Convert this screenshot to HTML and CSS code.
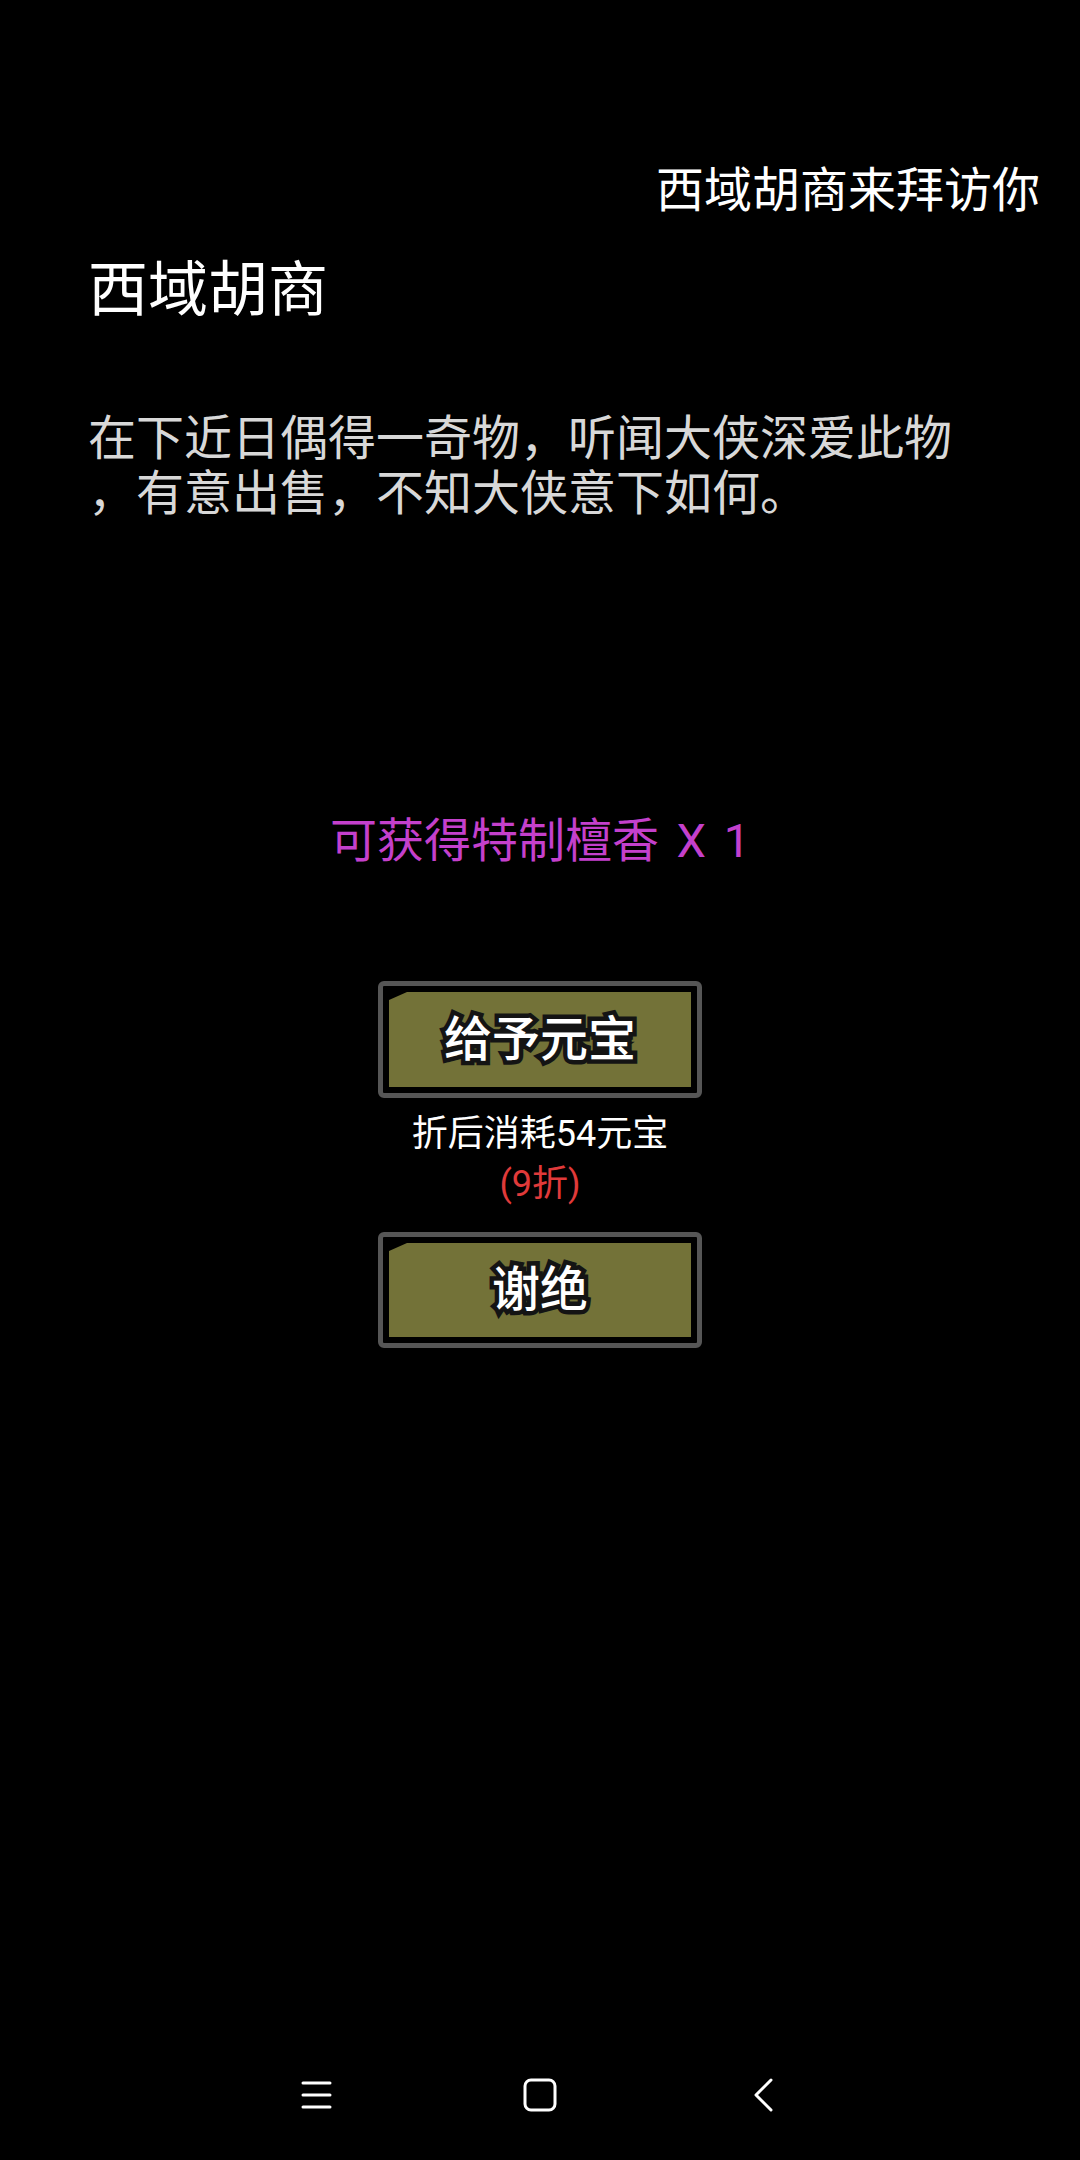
FILE: index.html
```html
<!DOCTYPE html>
<html lang="zh-CN">
<head>
<meta charset="utf-8">
<title>西域胡商</title>
<link rel="stylesheet" href="styles.css">
</head>
<body>
<div class="screen">
  <div class="notice">西域胡商来拜访你</div>
  <h1 class="title">西域胡商</h1>
  <p class="desc"><span class="line">在下近日偶得一奇物，听闻大侠深爱此物</span><span class="line">，有意出售，不知大侠意下如何。</span></p>
  <div class="reward">可获得特制檀香 X 1</div>
  <div class="actions">
    <button class="btn"><span class="btn-face"><span class="btn-label">给予元宝</span></span></button>
    <div class="cost">
      <span class="cost-main">折后消耗54元宝</span>
      <span class="cost-discount">(9折)</span>
    </div>
    <button class="btn btn-second"><span class="btn-face"><span class="btn-label">谢绝</span></span></button>
  </div>
  <nav class="navbar">
    <span class="nav-slot">
      <svg width="31" height="30" viewBox="0 0 31 30"><g stroke="#fff" stroke-width="3" stroke-linecap="round"><line x1="2" y1="3" x2="29" y2="3"/><line x1="2" y1="15" x2="29" y2="15"/><line x1="2" y1="27" x2="29" y2="27"/></g></svg>
    </span>
    <span class="nav-slot">
      <svg width="34" height="34" viewBox="0 0 34 34"><rect x="2" y="2" width="30" height="30" rx="6" ry="6" fill="none" stroke="#fff" stroke-width="3"/></svg>
    </span>
    <span class="nav-slot">
      <svg width="20" height="34" viewBox="0 0 20 34"><polyline points="17,2 2,17 17,32" fill="none" stroke="#fff" stroke-width="3" stroke-linecap="round" stroke-linejoin="round"/></svg>
    </span>
  </nav>
</div>
</body>
</html>
```
FILE: styles.css
```css
html, body {
  margin: 0;
  padding: 0;
  background: #000;
}
body {
  font-family: Roboto, "Noto Sans CJK SC", "Noto Sans", sans-serif;
  color: #fff;
}
.screen {
  display: flex;
  flex-direction: column;
  min-height: 2160px;
  box-sizing: border-box;
}
.notice {
  margin-top: 163px;
  padding-right: 40px;
  text-align: right;
  font-size: 48px;
  line-height: 56px;
  color: #fff;
}
.title {
  margin: 36px 0 0;
  padding-left: 88px;
  font-size: 60px;
  line-height: 72px;
  font-weight: 400;
  color: #fff;
}
.desc {
  margin: 84px 0 0;
  padding-left: 88px;
  font-size: 48px;
  line-height: 55px;
  color: #d8d8d8;
}
.line {
  display: block;
  white-space: nowrap;
}
.reward {
  margin-top: 292px;
  text-align: center;
  font-size: 47px;
  line-height: 56px;
  word-spacing: 6px;
  color: #c440cc;
}
.actions {
  margin-top: 112px;
  display: flex;
  flex-direction: column;
  align-items: center;
}
.btn {
  display: block;
  width: 324px;
  height: 117px;
  padding: 6px;
  margin: 0;
  border: 5px solid #565656;
  border-radius: 6px;
  background: #000;
  box-sizing: border-box;
  font: inherit;
  cursor: pointer;
}
.btn-second {
  margin-top: 23px;
  height: 116px;
}
.btn-face {
  display: flex;
  align-items: center;
  justify-content: center;
  width: 100%;
  height: 100%;
  background: #737238;
  clip-path: polygon(18px 0, 100% 0, 100% 100%, 0 100%, 0 8px);
}
.btn-label {
  font-size: 48px;
  line-height: 1;
  font-weight: 500;
  color: #fff;
  -webkit-text-stroke: 9px #141414;
  paint-order: stroke fill;
}
.cost {
  margin-top: 11px;
  display: flex;
  flex-direction: column;
  align-items: center;
  font-size: 36px;
  line-height: 50px;
}
.cost-main {
  color: #fff;
}
.cost-discount {
  color: #e03a3a;
}
.navbar {
  margin-top: auto;
  height: 130px;
  display: flex;
  align-items: center;
  justify-content: center;
  gap: 124px;
}
.nav-slot {
  width: 100px;
  display: flex;
  justify-content: center;
  align-items: center;
}
.nav-slot svg {
  display: block;
}
```
